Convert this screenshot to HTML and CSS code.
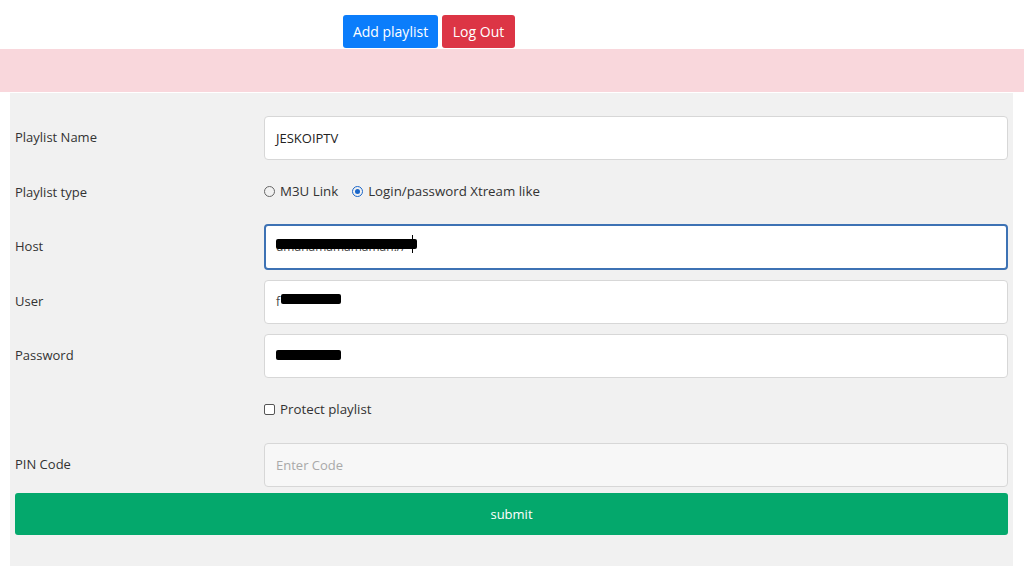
FILE: index.html
```html
<!DOCTYPE html>
<html lang="en">
<head>
    <meta charset="UTF-8">
    <meta name="viewport" content="width=device-width, initial-scale=1.0">
    <title>Playlist</title>
    <link rel="stylesheet" href="styles.css">
</head>
<body>
    <div class="topbar">
        <button class="btn btn-blue">Add playlist</button>
        <button class="btn btn-red">Log Out</button>
    </div>
    <div class="alert"></div>
    <form class="panel">
        <div class="row">
            <label class="label">Playlist Name</label>
            <div class="field">JESKOIPTV</div>
        </div>
        <div class="row">
            <label class="label">Playlist type</label>
            <div class="choices">
                <span class="radio"></span><span class="choice-text">M3U Link</span>
                <span class="radio checked"></span><span class="choice-text">Login/password Xtream like</span>
            </div>
        </div>
        <div class="row">
            <label class="label">Host</label>
            <div class="field focus">
                <span class="hidden-text host">umanamamamaman.//<span class="bar bar-host"></span><span class="caret"></span></span>
            </div>
        </div>
        <div class="row">
            <label class="label">User</label>
            <div class="field">
                <span class="hidden-text">f<span class="bar bar-user"></span></span>
            </div>
        </div>
        <div class="row">
            <label class="label">Password</label>
            <div class="field">
                <span class="hidden-text"><span class="bar bar-pass"></span></span>
            </div>
        </div>
        <div class="row">
            <label class="label"></label>
            <div class="choices">
                <span class="checkbox"></span><span class="choice-text">Protect playlist</span>
            </div>
        </div>
        <div class="row">
            <label class="label">PIN Code</label>
            <div class="field disabled">Enter Code</div>
        </div>
        <button type="button" class="submit">submit</button>
    </form>
</body>
</html>
```

FILE: styles.css
```css
body {
    margin: 0;
    font-family: "Open Sans", "Noto Sans", sans-serif;
    background-color: #ffffff;
    color: #212529;
}

.topbar {
    display: flex;
    gap: 4px;
    padding: 15px 0 1px 343px;
}

.btn {
    font-family: "Open Sans", sans-serif;
    font-size: 14px;
    color: white;
    border: none;
    border-radius: 3px;
    height: 33px;
    padding: 0;
    white-space: nowrap;
    cursor: pointer;
}

.btn-blue {
    background-color: #0b7dfb;
    width: 95px;
}

.btn-red {
    background-color: #dc3545;
    width: 73px;
}

.alert {
    height: 43px;
    background-color: #f9d7dc;
}

.panel {
    margin: 1px 11px 0 10px;
    padding: 23px 5px 31px 5px;
    background-color: #f1f1f1;
    display: flex;
    flex-direction: column;
    gap: 10.5px;
}

.row {
    display: flex;
    align-items: center;
    height: 44px;
}

.label {
    width: 249px;
    font-size: 13px;
    color: #333;
    margin-top: -2px;
}

.field {
    flex: 1;
    box-sizing: border-box;
    height: 44px;
    background: #ffffff;
    border: 1px solid #d7d7d7;
    border-radius: 4px;
    padding: 0 11px;
    display: flex;
    align-items: center;
    font-size: 13px;
    color: #222;
}

.row:nth-child(3) .field {
    height: 46px;
    margin-top: -1px;
}

.field.focus {
    border: 2px solid #3d72b4;
    padding-left: 10px;
}

.field.disabled {
    background-color: #f7f7f7;
    color: #a9a9a9;
}

.hidden-text {
    position: relative;
    display: inline-block;
    font-size: 12px;
    color: #444;
}

.bar {
    position: absolute;
    background: #000;
    height: 10px;
    top: 3px;
    border-radius: 2px;
}

.bar-host {
    left: 0;
    width: 141px;
    top: 1px;
}

.bar-user {
    left: 5px;
    width: 60px;
    top: 1px;
}

.bar-pass {
    left: 0;
    width: 65px;
    top: -6px;
}

.caret {
    position: absolute;
    left: 136px;
    top: -3px;
    width: 1px;
    height: 18px;
    background: #000;
}

.choices {
    display: flex;
    align-items: center;
    font-size: 13.3px;
    color: #333;
    margin-top: -3px;
}

.radio {
    width: 9px;
    height: 9px;
    border: 1px solid #666;
    border-radius: 50%;
    margin-right: 5px;
    box-sizing: content-box;
    position: relative;
}

.radio.checked {
    border-color: #1a66c9;
    margin-left: 14px;
}

.radio.checked::after {
    content: "";
    position: absolute;
    left: 2px;
    top: 2px;
    width: 5px;
    height: 5px;
    border-radius: 50%;
    background: #1a66c9;
}

.checkbox {
    width: 9px;
    height: 9px;
    border: 1px solid #555;
    border-radius: 2px;
    margin-right: 5px;
    background: #fff;
}

.submit {
    margin-top: -5px;
    height: 42px;
    border: none;
    border-radius: 3px;
    background-color: #04a86c;
    color: #ffffff;
    font-family: "Open Sans", sans-serif;
    font-size: 13px;
}
```
